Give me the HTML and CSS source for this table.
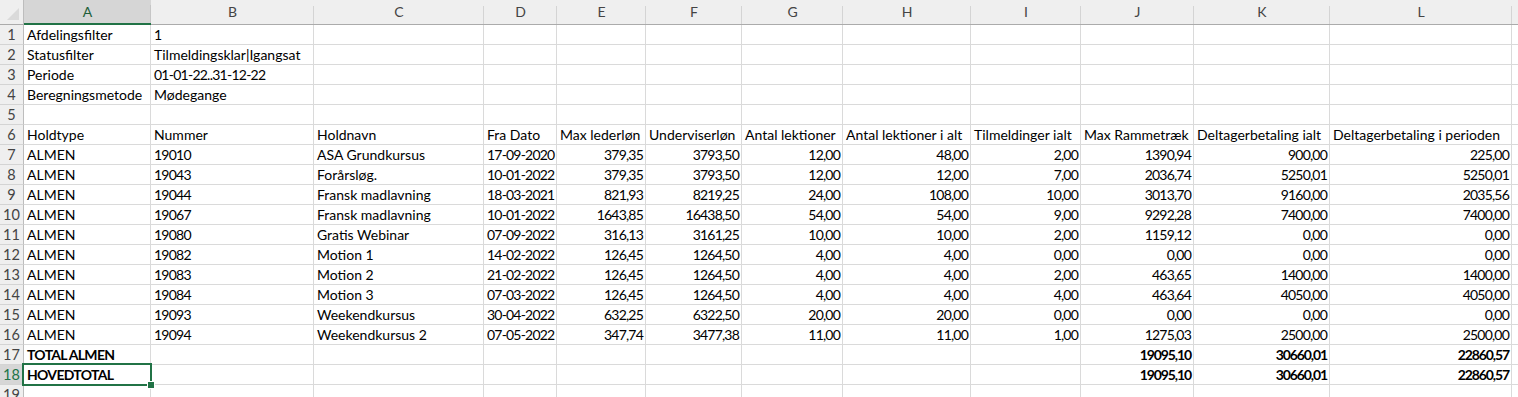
FILE: index.html
```html
<!DOCTYPE html>
<html lang="da">
<head>
<meta charset="utf-8">
<title>Hold oversigt</title>
<link rel="stylesheet" href="styles.css">
</head>
<body>
<div class="sheet">
  <div class="grid">
    <!-- column headers -->
    <div class="corner"><svg width="24" height="25" viewBox="0 0 24 25"><polygon points="19,8 19,20 7,20" fill="#dadada"/></svg></div>
    <div class="ch active">A</div><div class="ch">B</div><div class="ch">C</div><div class="ch">D</div><div class="ch">E</div><div class="ch">F</div><div class="ch">G</div><div class="ch">H</div><div class="ch">I</div><div class="ch">J</div><div class="ch">K</div><div class="ch">L</div><div class="ch last"></div>

    <!-- 1 -->
    <div class="rh">1</div><div class="c">Afdelingsfilter</div><div class="c d">1</div><div class="c"></div><div class="c"></div><div class="c"></div><div class="c"></div><div class="c"></div><div class="c"></div><div class="c"></div><div class="c"></div><div class="c"></div><div class="c"></div><div class="c"></div>
    <!-- 2 -->
    <div class="rh">2</div><div class="c">Statusfilter</div><div class="c">Tilmeldingsklar|Igangsat</div><div class="c"></div><div class="c"></div><div class="c"></div><div class="c"></div><div class="c"></div><div class="c"></div><div class="c"></div><div class="c"></div><div class="c"></div><div class="c"></div><div class="c"></div>
    <!-- 3 -->
    <div class="rh">3</div><div class="c">Periode</div><div class="c d">01-01-22..31-12-22</div><div class="c"></div><div class="c"></div><div class="c"></div><div class="c"></div><div class="c"></div><div class="c"></div><div class="c"></div><div class="c"></div><div class="c"></div><div class="c"></div><div class="c"></div>
    <!-- 4 -->
    <div class="rh">4</div><div class="c">Beregningsmetode</div><div class="c">Mødegange</div><div class="c"></div><div class="c"></div><div class="c"></div><div class="c"></div><div class="c"></div><div class="c"></div><div class="c"></div><div class="c"></div><div class="c"></div><div class="c"></div><div class="c"></div>
    <!-- 5 -->
    <div class="rh">5</div><div class="c"></div><div class="c"></div><div class="c"></div><div class="c"></div><div class="c"></div><div class="c"></div><div class="c"></div><div class="c"></div><div class="c"></div><div class="c"></div><div class="c"></div><div class="c"></div><div class="c"></div>
    <!-- 6 -->
    <div class="rh">6</div><div class="c">Holdtype</div><div class="c">Nummer</div><div class="c">Holdnavn</div><div class="c">Fra Dato</div><div class="c">Max lederløn</div><div class="c">Underviserløn</div><div class="c">Antal lektioner</div><div class="c">Antal lektioner i alt</div><div class="c">Tilmeldinger ialt</div><div class="c">Max Rammetræk</div><div class="c">Deltagerbetaling ialt</div><div class="c">Deltagerbetaling i perioden</div><div class="c"></div>
    <!-- 7 -->
    <div class="rh">7</div><div class="c">ALMEN</div><div class="c d">19010</div><div class="c">ASA Grundkursus</div><div class="c n">17-09-2020</div><div class="c n">379,35</div><div class="c n">3793,50</div><div class="c n">12,00</div><div class="c n">48,00</div><div class="c n">2,00</div><div class="c n">1390,94</div><div class="c n">900,00</div><div class="c n">225,00</div><div class="c"></div>
    <!-- 8 -->
    <div class="rh">8</div><div class="c">ALMEN</div><div class="c d">19043</div><div class="c">Forårsløg.</div><div class="c n">10-01-2022</div><div class="c n">379,35</div><div class="c n">3793,50</div><div class="c n">12,00</div><div class="c n">12,00</div><div class="c n">7,00</div><div class="c n">2036,74</div><div class="c n">5250,01</div><div class="c n">5250,01</div><div class="c"></div>
    <!-- 9 -->
    <div class="rh">9</div><div class="c">ALMEN</div><div class="c d">19044</div><div class="c">Fransk madlavning</div><div class="c n">18-03-2021</div><div class="c n">821,93</div><div class="c n">8219,25</div><div class="c n">24,00</div><div class="c n">108,00</div><div class="c n">10,00</div><div class="c n">3013,70</div><div class="c n">9160,00</div><div class="c n">2035,56</div><div class="c"></div>
    <!-- 10 -->
    <div class="rh">10</div><div class="c">ALMEN</div><div class="c d">19067</div><div class="c">Fransk madlavning</div><div class="c n">10-01-2022</div><div class="c n">1643,85</div><div class="c n">16438,50</div><div class="c n">54,00</div><div class="c n">54,00</div><div class="c n">9,00</div><div class="c n">9292,28</div><div class="c n">7400,00</div><div class="c n">7400,00</div><div class="c"></div>
    <!-- 11 -->
    <div class="rh">11</div><div class="c">ALMEN</div><div class="c d">19080</div><div class="c">Gratis Webinar</div><div class="c n">07-09-2022</div><div class="c n">316,13</div><div class="c n">3161,25</div><div class="c n">10,00</div><div class="c n">10,00</div><div class="c n">2,00</div><div class="c n">1159,12</div><div class="c n">0,00</div><div class="c n">0,00</div><div class="c"></div>
    <!-- 12 -->
    <div class="rh">12</div><div class="c">ALMEN</div><div class="c d">19082</div><div class="c">Motion 1</div><div class="c n">14-02-2022</div><div class="c n">126,45</div><div class="c n">1264,50</div><div class="c n">4,00</div><div class="c n">4,00</div><div class="c n">0,00</div><div class="c n">0,00</div><div class="c n">0,00</div><div class="c n">0,00</div><div class="c"></div>
    <!-- 13 -->
    <div class="rh">13</div><div class="c">ALMEN</div><div class="c d">19083</div><div class="c">Motion 2</div><div class="c n">21-02-2022</div><div class="c n">126,45</div><div class="c n">1264,50</div><div class="c n">4,00</div><div class="c n">4,00</div><div class="c n">2,00</div><div class="c n">463,65</div><div class="c n">1400,00</div><div class="c n">1400,00</div><div class="c"></div>
    <!-- 14 -->
    <div class="rh">14</div><div class="c">ALMEN</div><div class="c d">19084</div><div class="c">Motion 3</div><div class="c n">07-03-2022</div><div class="c n">126,45</div><div class="c n">1264,50</div><div class="c n">4,00</div><div class="c n">4,00</div><div class="c n">4,00</div><div class="c n">463,64</div><div class="c n">4050,00</div><div class="c n">4050,00</div><div class="c"></div>
    <!-- 15 -->
    <div class="rh">15</div><div class="c">ALMEN</div><div class="c d">19093</div><div class="c">Weekendkursus</div><div class="c n">30-04-2022</div><div class="c n">632,25</div><div class="c n">6322,50</div><div class="c n">20,00</div><div class="c n">20,00</div><div class="c n">0,00</div><div class="c n">0,00</div><div class="c n">0,00</div><div class="c n">0,00</div><div class="c"></div>
    <!-- 16 -->
    <div class="rh">16</div><div class="c">ALMEN</div><div class="c d">19094</div><div class="c">Weekendkursus 2</div><div class="c n">07-05-2022</div><div class="c n">347,74</div><div class="c n">3477,38</div><div class="c n">11,00</div><div class="c n">11,00</div><div class="c n">1,00</div><div class="c n">1275,03</div><div class="c n">2500,00</div><div class="c n">2500,00</div><div class="c"></div>
    <!-- 17 -->
    <div class="rh">17</div><div class="c b">TOTAL ALMEN</div><div class="c"></div><div class="c"></div><div class="c"></div><div class="c"></div><div class="c"></div><div class="c"></div><div class="c"></div><div class="c"></div><div class="c n b">19095,10</div><div class="c n b">30660,01</div><div class="c n b">22860,57</div><div class="c"></div>
    <!-- 18 -->
    <div class="rh active">18</div><div class="c b">HOVEDTOTAL</div><div class="c"></div><div class="c"></div><div class="c"></div><div class="c"></div><div class="c"></div><div class="c"></div><div class="c"></div><div class="c"></div><div class="c n b">19095,10</div><div class="c n b">30660,01</div><div class="c n b">22860,57</div><div class="c"></div>
    <!-- 19 -->
    <div class="rh">19</div><div class="c"></div><div class="c"></div><div class="c"></div><div class="c"></div><div class="c"></div><div class="c"></div><div class="c"></div><div class="c"></div><div class="c"></div><div class="c"></div><div class="c"></div><div class="c"></div><div class="c"></div>
  </div>
  <div class="selection"><span class="handle"></span></div>
</div>
</body>
</html>
```
FILE: styles.css
```css
html, body {
  margin: 0;
  padding: 0;
  background: #ffffff;
  overflow: hidden;
}

.sheet {
  position: relative;
  width: 1518px;
  height: 397px;
  overflow: hidden;
  font-family: Lato, "Liberation Sans", sans-serif;
  font-size: 14px;
  color: #000;
}

.grid {
  display: grid;
  grid-template-columns: 24px 127px 163px 170px 73px 89px 96px 101px 128px 110px 113px 136px 182px 60px;
  grid-template-rows: 25px;
  grid-auto-rows: 20px;
}

.corner {
  background: #efefef;
  border-right: 1px solid #bdbdbd;
  border-bottom: 1px solid #ababab;
  box-sizing: border-box;
  line-height: 0;
}

.ch {
  box-sizing: border-box;
  background: linear-gradient(#d4d4d4, #d4d4d4) right bottom / 1px 18px no-repeat, #efefef;
  border-bottom: 1px solid #ababab;
  color: #444;
  text-align: center;
  line-height: 24px;
}

.ch.active {
  background: linear-gradient(#c6c6c6, #c6c6c6) right bottom / 1px 18px no-repeat, #d6d6d6;
  border-bottom: 2px solid #217346;
  color: #1e5e3a;
  line-height: 23px;
}

.rh {
  box-sizing: border-box;
  background: #efefef;
  border-right: 1px solid #bdbdbd;
  border-bottom: 1px solid #d4d4d4;
  color: #444;
  text-align: center;
  line-height: 19px;
  font-size: 14.5px;
}

.rh.active {
  background: #d6d6d6;
  color: #217346;
}

.c {
  box-sizing: border-box;
  border-right: 1px solid #dadada;
  border-bottom: 1px solid #dadada;
  padding: 0 3px;
  line-height: 19px;
  white-space: nowrap;
  overflow: visible;
}

.n {
  text-align: right;
  padding-right: 2px;
  letter-spacing: -0.8px;
}

.d {
  letter-spacing: -0.75px;
}

.b {
  font-weight: bold;
  letter-spacing: -0.7px;
}

.n.b {
  letter-spacing: -1.1px;
}

.selection {
  position: absolute;
  left: 22px;
  top: 363px;
  width: 130px;
  height: 23px;
  box-sizing: border-box;
  border: 2px solid #217346;
}

.handle {
  position: absolute;
  right: -5px;
  bottom: -5px;
  width: 6px;
  height: 6px;
  background: #217346;
  border: 1px solid #ffffff;
}
```
